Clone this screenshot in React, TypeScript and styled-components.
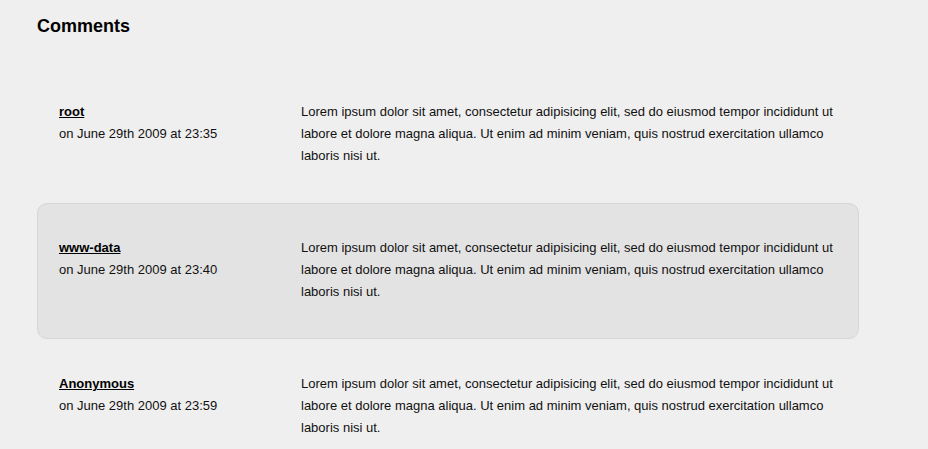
import React from 'react';
import styled, { createGlobalStyle } from 'styled-components';

const GlobalStyle = createGlobalStyle`
  html, body {
    margin: 0;
    padding: 0;
    background: #efefef;
  }
  body {
    font-family: "Liberation Sans", Arial, sans-serif;
    color: #111;
  }
`;

const Page = styled.div`
  padding: 16px 0 0 37px;
  width: 822px;
`;

const Heading = styled.h2`
  margin: 0 0 30px;
  font-size: 18px;
  line-height: 21px;
  font-weight: bold;
  color: #000;
`;

const List = styled.ol`
  list-style: none;
  margin: 0;
  padding: 0;
`;

const Comment = styled.li<{ $highlight?: boolean }>`
  display: flex;
  padding: 33px 21px 35px;
  border: 1px solid ${p => (p.$highlight ? '#d6d6d6' : 'transparent')};
  border-radius: 10px;
  background: ${p => (p.$highlight ? '#e3e3e3' : 'transparent')};
  font-size: 13px;
  line-height: 22px;
`;

const Meta = styled.div`
  flex: 0 0 242px;
`;

const Author = styled.a`
  display: block;
  color: #000;
  font-weight: bold;
  text-decoration: underline;
`;

const Body = styled.p`
  margin: 0;
  flex: 1;
  color: #111;
`;

const lorem =
  'Lorem ipsum dolor sit amet, consectetur adipisicing elit, sed do eiusmod tempor incididunt ut labore et dolore magna aliqua. Ut enim ad minim veniam, quis nostrud exercitation ullamco laboris nisi ut.';

const comments = [
  { author: 'root', date: 'on June 29th 2009 at 23:35' },
  { author: 'www-data', date: 'on June 29th 2009 at 23:40', highlight: true },
  { author: 'Anonymous', date: 'on June 29th 2009 at 23:59' },
];

export default function App() {
  return (
    <>
      <GlobalStyle />
      <Page>
        <Heading>Comments</Heading>
        <List>
          {comments.map(c => (
            <Comment key={c.author} $highlight={c.highlight}>
              <Meta>
                <Author href="#">{c.author}</Author>
                <div>{c.date}</div>
              </Meta>
              <Body>{lorem}</Body>
            </Comment>
          ))}
        </List>
      </Page>
    </>
  );
}
